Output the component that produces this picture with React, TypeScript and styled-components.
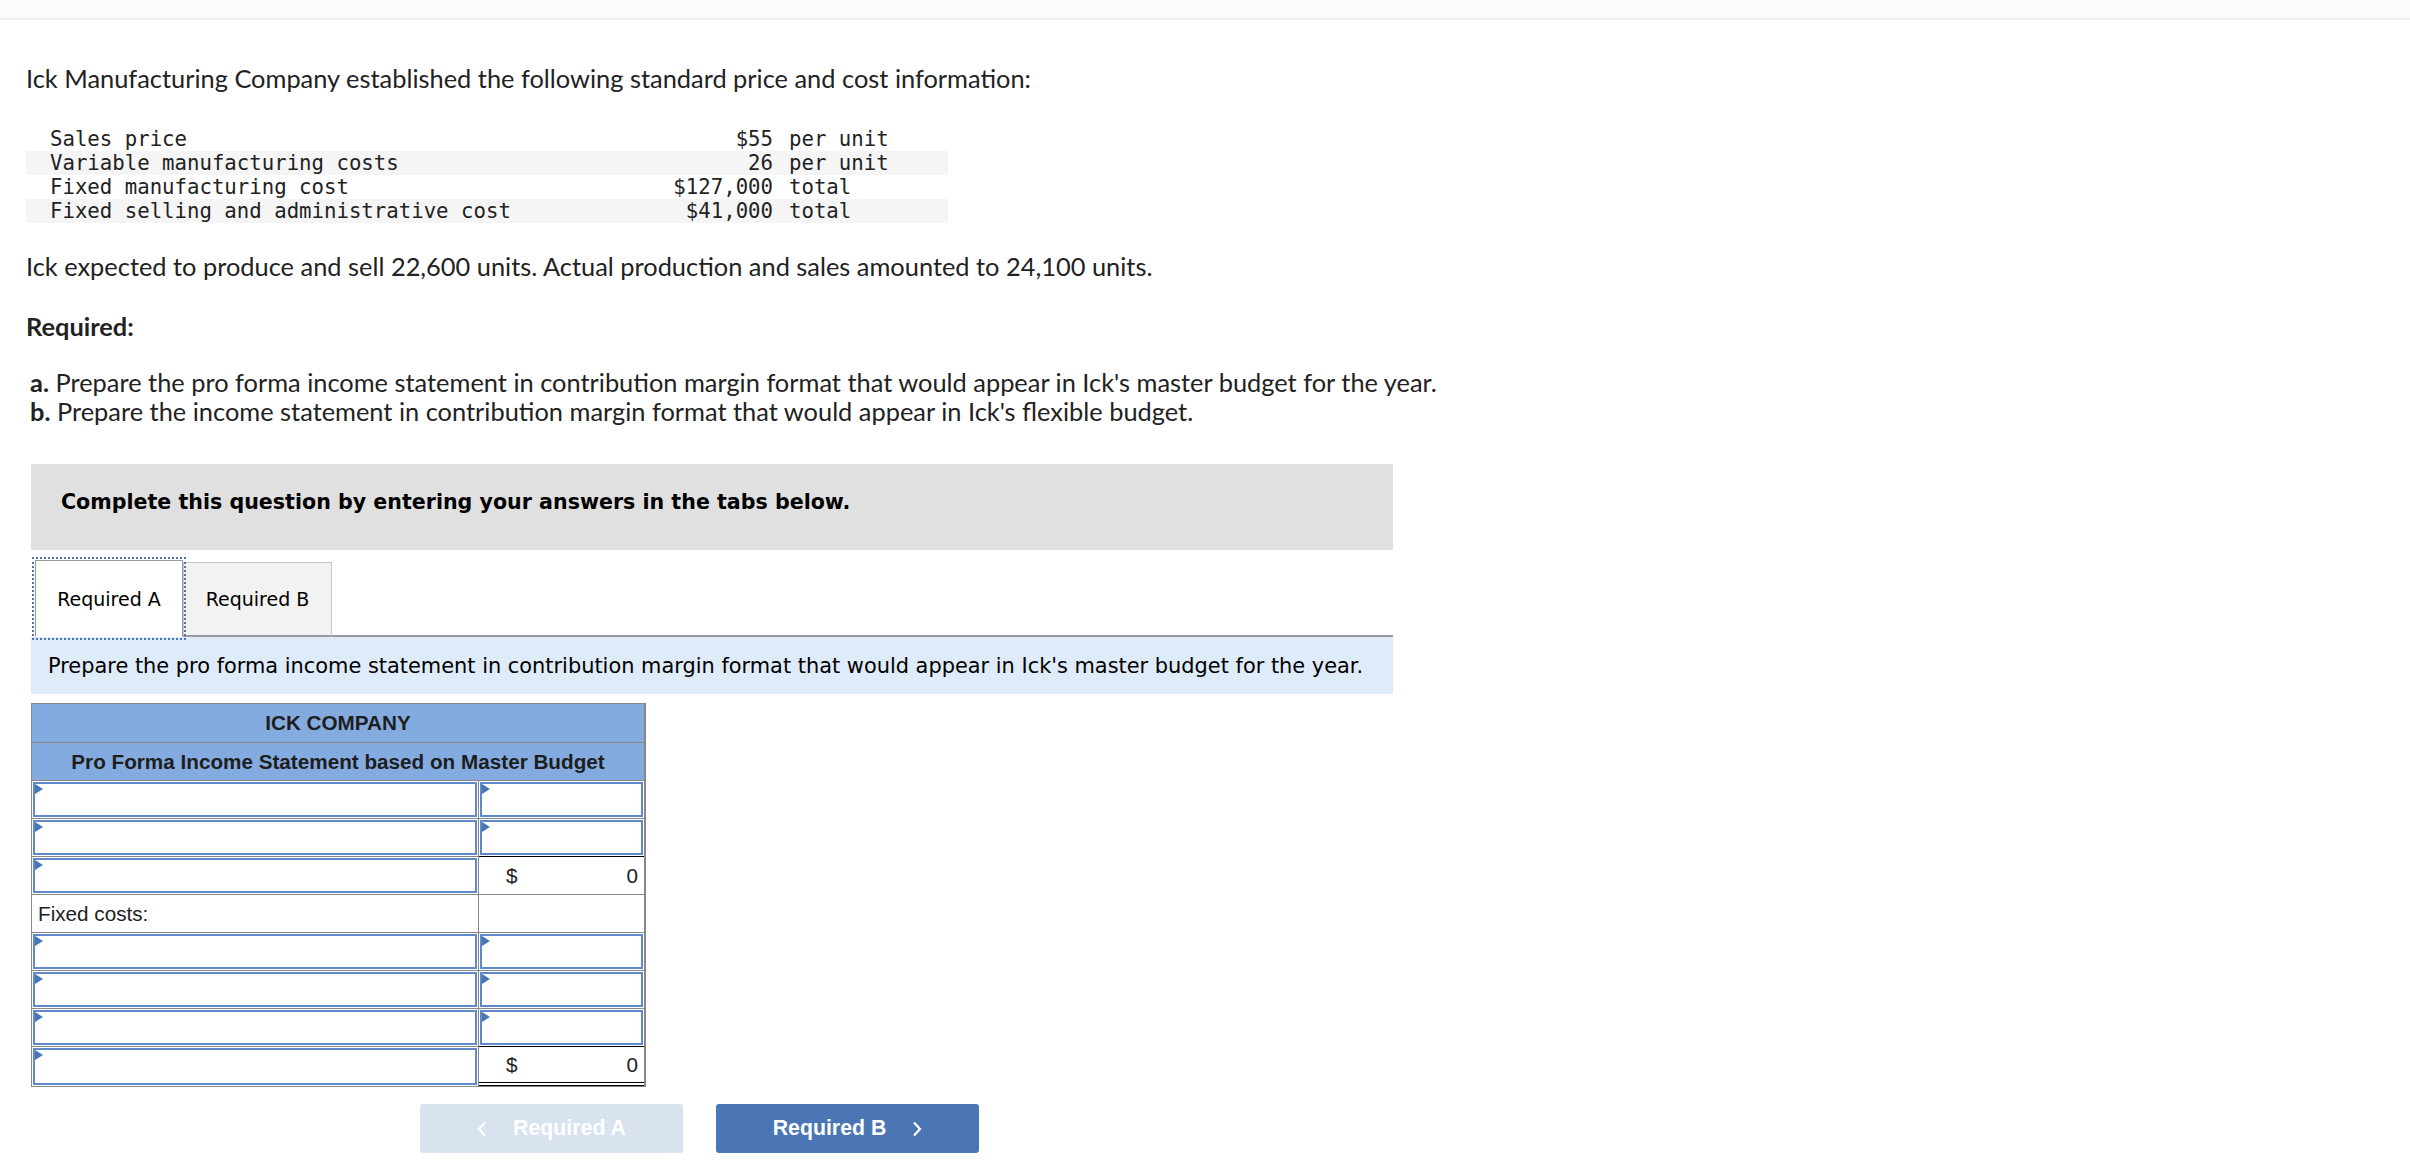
import styled, { createGlobalStyle } from "styled-components";

const Global = createGlobalStyle`
    body {
        margin: 0;
        background: #fff;
        color: #222;
        font-family: 'Lato', 'Liberation Sans', sans-serif;
    }
`

const costs = [
    { label: 'Sales price', value: '$55', unit: 'per unit' },
    { label: 'Variable manufacturing costs', value: '26', unit: 'per unit' },
    { label: 'Fixed manufacturing cost', value: '$127,000', unit: 'total' },
    { label: 'Fixed selling and administrative cost', value: '$41,000', unit: 'total' },
]

type Row = { kind: 'input' | 'label' | 'total' | 'grand'; text?: string }

const rows: Row[] = [
    { kind: 'input' },
    { kind: 'input' },
    { kind: 'total' },
    { kind: 'label', text: 'Fixed costs:' },
    { kind: 'input' },
    { kind: 'input' },
    { kind: 'input' },
    { kind: 'grand' },
]

const InputBox = () => (
    <Field>
        <Marker />
    </Field>
)

export default function App() {
    return (
        <>
            <Global />
            <TopBar />
            <Page>
                <Intro>Ick Manufacturing Company established the following standard price and cost information:</Intro>
                <CostTable>
                    {costs.map((c, i) => (
                        <CostRow key={c.label} $shade={i % 2 === 1}>
                            <CostLabel>{c.label}</CostLabel>
                            <CostValue>{c.value}</CostValue>
                            <CostUnit>{c.unit}</CostUnit>
                        </CostRow>
                    ))}
                </CostTable>
                <Para $gap={29}>Ick expected to produce and sell 22,600 units. Actual production and sales amounted to 24,100 units.</Para>
                <Heading>Required:</Heading>
                <Parts>
                    <Para><b>a.</b> Prepare the pro forma income statement in contribution margin format that would appear in Ick's master budget for the year.</Para>
                    <Para><b>b.</b> Prepare the income statement in contribution margin format that would appear in Ick's flexible budget.</Para>
                </Parts>

                <Notice>Complete this question by entering your answers in the tabs below.</Notice>

                <Tabs>
                    <Tab $active>Required A</Tab>
                    <Tab>Required B</Tab>
                    <TabRest />
                </Tabs>
                <Instruction>Prepare the pro forma income statement in contribution margin format that would appear in Ick's master budget for the year.</Instruction>

                <Statement>
                    <HeadCell $h={38}>ICK COMPANY</HeadCell>
                    <HeadCell $h={37}>Pro Forma Income Statement based on Master Budget</HeadCell>
                    {rows.map((r, i) => (
                        <Line key={i}>
                            <LeftCell>
                                {r.kind === 'label' ? <LabelText>{r.text}</LabelText> : <InputBox />}
                            </LeftCell>
                            <RightCell $kind={r.kind}>
                                {r.kind === 'input' && <InputBox />}
                                {(r.kind === 'total' || r.kind === 'grand') && (
                                    <Amount>
                                        <span>$</span>
                                        <span>0</span>
                                    </Amount>
                                )}
                            </RightCell>
                        </Line>
                    ))}
                </Statement>

                <Nav>
                    <NavButton $disabled>
                        <Chevron viewBox="0 0 10 16"><path d="M8 1.5 L2 8 L8 14.5" /></Chevron>
                        Required A
                    </NavButton>
                    <NavButton>
                        Required B
                        <Chevron viewBox="0 0 10 16"><path d="M2 1.5 L8 8 L2 14.5" /></Chevron>
                    </NavButton>
                </Nav>
            </Page>
        </>
    )
}

const TopBar = styled.div`
    height: 18px;
    background: #fbfbfb;
    border-bottom: 2px solid #efefef;
`

const Page = styled.div`
    padding: 43px 0 20px 26px;
`

const Intro = styled.p`
    margin: 0;
    font-size: 25.4px;
    line-height: 30px;
    color: #222;
`

const CostTable = styled.div`
    margin: 34px 0 0 0;
    width: 922px;
`

const CostRow = styled.div<{ $shade?: boolean }>`
    display: grid;
    grid-template-columns: 24px 723px 16px 1fr;
    height: 24px;
    align-items: center;
    background: ${p => p.$shade ? '#f5f5f5' : 'transparent'};
    font-family: 'DejaVu Sans Mono', monospace;
    font-size: 20.7px;
    color: #222;
    white-space: pre;
`

const CostLabel = styled.span`
    grid-column: 2;
    grid-row: 1;
`

const CostValue = styled.span`
    grid-column: 2;
    grid-row: 1;
    justify-self: end;
`

const CostUnit = styled.span`
    grid-column: 4;
    grid-row: 1;
`

const Para = styled.p<{ $gap?: number }>`
    margin: ${p => p.$gap ?? 0}px 0 0 0;
    font-size: 25.4px;
    line-height: 29px;
    white-space: nowrap;
`

const Heading = styled.p`
    margin: 31px 0 0 0;
    font-size: 25.4px;
    line-height: 29px;
    font-weight: 700;
`

const Parts = styled.div`
    display: flex;
    flex-direction: column;
    margin-top: 27px;
    padding-left: 4px;
`

const Notice = styled.div`
    margin: 38px 0 0 5px;
    width: 1362px;
    height: 86px;
    box-sizing: border-box;
    background: #e0e0e0;
    padding: 0 0 0 30px;
    font-family: 'DejaVu Sans', Verdana, sans-serif;
    font-weight: 700;
    font-size: 20.6px;
    line-height: 76px;
    color: #000;
`

const Tabs = styled.div`
    display: flex;
    width: 1362px;
    box-sizing: border-box;
    margin: 10px 0 0 5px;
    padding-left: 4px;
    height: 77px;
    align-items: flex-end;
`

const Tab = styled.div<{ $active?: boolean }>`
    width: ${p => p.$active ? '148px' : '149px'};
    height: ${p => p.$active ? '77px' : '75px'};
    box-sizing: border-box;
    display: flex;
    align-items: center;
    justify-content: center;
    font-family: 'DejaVu Sans', Verdana, sans-serif;
    font-size: 19px;
    color: #000;
    background: ${p => p.$active ? '#fff' : '#f2f2f2'};
    border: ${p => p.$active ? '1px solid #999' : '1px solid #c6c6c6'};
    border-bottom: ${p => p.$active ? '1px solid #fff' : '2px solid #999'};
    outline: ${p => p.$active ? '2px dotted #4a76b5' : 'none'};
    outline-offset: 1px;
    position: relative;
    z-index: ${p => p.$active ? 1 : 0};
`

const TabRest = styled.div`
    flex: 1;
    border-bottom: 2px solid #999;
`

const Instruction = styled.div`
    margin-left: 5px;
    width: 1362px;
    height: 57px;
    box-sizing: border-box;
    background: #deebf8;
    padding-left: 17px;
    display: flex;
    align-items: center;
    font-family: 'DejaVu Sans', Verdana, sans-serif;
    font-size: 20.9px;
    color: #000;
`

const Statement = styled.div`
    margin: 9px 0 0 5px;
    width: 612px;
    border: 1px solid #888;
    border-right-width: 2px;
    font-family: 'Liberation Sans', Arial, sans-serif;
`

const HeadCell = styled.div<{ $h: number }>`
    height: ${p => p.$h}px;
    background: #84abe0;
    border-bottom: 1px solid #888;
    display: flex;
    align-items: center;
    justify-content: center;
    font-weight: 700;
    font-size: 20.7px;
    color: #1e1e1e;
`

const Line = styled.div`
    display: grid;
    grid-template-columns: 447px 1fr;
    height: 37px;
    border-bottom: 1px solid #888;
    &:last-child {
        border-bottom: none;
        height: 39px;
    }
`

const LeftCell = styled.div`
    border-right: 1px solid #888;
    display: flex;
    align-items: center;
    min-width: 0;
`

const RightCell = styled.div<{ $kind: string }>`
    display: flex;
    align-items: center;
    min-width: 0;
    border-top: ${p => (p.$kind === 'total' || p.$kind === 'grand') ? '1px solid #000' : 'none'};
    border-bottom: ${p => p.$kind === 'grand' ? '4px double #000' : 'none'};
    margin-top: ${p => (p.$kind === 'total' || p.$kind === 'grand') ? '-1px' : '0'};
`

const Field = styled.div`
    position: relative;
    align-self: stretch;
    flex: 1;
    margin: 1px;
    border: 2px solid #5f89c9;
    background: #fff;
`

const Marker = styled.span`
    position: absolute;
    top: 0;
    left: 0;
    width: 0;
    height: 0;
    border-top: 5px solid transparent;
    border-bottom: 5px solid transparent;
    border-left: 8px solid #4a76b5;
`

const LabelText = styled.span`
    padding-left: 6px;
    font-size: 20.7px;
    color: #222;
`

const Amount = styled.div`
    flex: 1;
    display: flex;
    justify-content: space-between;
    padding: 0 6px 0 27px;
    font-size: 20.7px;
    color: #222;
`

const Nav = styled.div`
    display: flex;
    gap: 33px;
    margin: 17px 0 0 394px;
`

const NavButton = styled.div<{ $disabled?: boolean }>`
    width: 263px;
    height: 49px;
    border-radius: 3px;
    background: ${p => p.$disabled ? '#d9e3f0' : '#4a76b5'};
    color: #fff;
    display: flex;
    align-items: center;
    justify-content: center;
    gap: 26px;
    font-family: 'Liberation Sans', Arial, sans-serif;
    font-weight: 700;
    font-size: 21.3px;
`

const Chevron = styled.svg`
    width: 10px;
    height: 16px;
    fill: none;
    stroke: #fff;
    stroke-width: 2.2;
`
